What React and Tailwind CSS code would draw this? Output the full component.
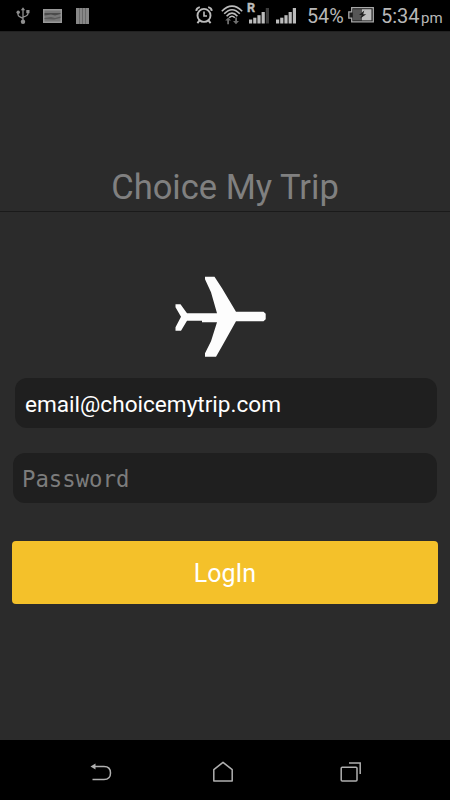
function UsbIcon() {
  return (
    <svg width="14" height="18" viewBox="0 0 14 18" fill="none" stroke="#8f8f8f" strokeWidth="1.3">
      <path d="M7 2.5V14M2 5.5V7.5Q2 9 4 9.8L7 11.3M12 4.5V6.5Q12 8.2 10 9L7 10.2" />
      <path d="M7 0.3L9.2 3.2H4.8Z" fill="#8f8f8f" stroke="none" />
      <circle cx="7" cy="14.8" r="2.2" fill="#8f8f8f" stroke="none" />
      <circle cx="2.2" cy="5.2" r="1.7" fill="#8f8f8f" stroke="none" />
      <rect x="10.3" y="3" width="3.2" height="3.2" fill="#8f8f8f" stroke="none" />
    </svg>
  );
}

function GalleryIcon() {
  return (
    <svg width="19" height="14" viewBox="0 0 19 14">
      <rect width="19" height="14" fill="#999" />
      <rect x="1.5" y="1.5" width="16" height="11" fill="#777" />
      <path d="M1.5 4H17.5V5L12 6.5L8 5.5L1.5 6.5Z" fill="#4a4a4a" />
      <path d="M1.5 9L8 8L12 9L17.5 7.5V9L11 10.5L1.5 10Z" fill="#595959" />
    </svg>
  );
}

function BarsIcon() {
  return (
    <svg width="13" height="16" viewBox="0 0 13 16">
      <rect width="13" height="16" fill="#888" />
      <path d="M3.5 0V16M6.5 0V16M9.5 0V16" stroke="#6a6a6a" strokeWidth="1" />
    </svg>
  );
}

function AlarmIcon() {
  return (
    <svg width="18" height="18" viewBox="0 0 18 18" fill="none" stroke="#bcbcbc" strokeWidth="1.9">
      <circle cx="9" cy="9.4" r="6.5" />
      <path d="M9 5.6V10H12" strokeWidth="1.6" />
      <path d="M1.2 4.8Q1.6 2 4.8 1.2M16.8 4.8Q16.4 2 13.2 1.2M4.4 14.6L2.4 17.2M13.6 14.6L15.6 17.2" />
    </svg>
  );
}

function WifiIcon() {
  return (
    <svg width="22" height="20" viewBox="0 0 22 20" fill="none" stroke="#bcbcbc" strokeWidth="1.6">
      <path d="M0.8 6.2Q11 -4 21.2 6.2M3.2 8.8Q11 0.6 18.8 8.8M5.6 11.2Q11 5 16.4 11.2M8.2 12.8Q11 9.6 13.8 12.8" />
      <path d="M7.2 12.4L10 15.6H8V19.2H6.2V15.6H4.2ZM15 19.2L18 16H16V12.6H14.2V16H12Z" fill="#6e6e6e" stroke="none" />
    </svg>
  );
}

function SignalIcon({ roaming }) {
  return (
    <svg className="overflow-visible" width="21" height="20" viewBox="0 0 21 20" fill="#bcbcbc">
      <rect x="0" y="15.5" width="3.2" height="4" />
      <rect x="4.2" y="13.7" width="3.2" height="5.8" />
      <rect x="8.4" y="11.2" width="3.2" height="8.3" />
      <rect x="12.6" y="8" width="3.2" height="11.5" />
      <rect x="16.8" y="4" width="3.2" height="15.5" fill={roaming ? "#3d3d3d" : "#bcbcbc"} />
      {roaming && (
        <text x="-2" y="8.4" fontSize="12.5" fontWeight="700" stroke="#bcbcbc" strokeWidth="0.4">R</text>
      )}
    </svg>
  );
}

function BatteryIcon() {
  return (
    <svg width="26" height="16" viewBox="0 0 26 16">
      <path d="M3.7 0.7H25.3V14.8H3.7V11.2H0.8V4.8H3.7Z" fill="#1d1d1d" stroke="#a8a8a8" strokeWidth="1.3" />
      <rect x="4.8" y="2.2" width="9.2" height="11.2" fill="#565656" />
      <rect x="14" y="2.2" width="9.5" height="11.2" fill="#bcbcbc" />
      <path d="M16.3 3.4L11 8H13.8L12.2 11.6L18.2 7.2H15.2Z" fill="#1f1f1f" />
    </svg>
  );
}

function PlaneIcon() {
  return (
    <svg width="92" height="82" viewBox="0 0.8 92 82" fill="#fdfdfd">
      <path d="M30 1.5H39.5L47 13L61 36.5H88.5L90.7 38.5V44L88.5 46H61L47 71L41 81.5H30V78L36 66L42 47H27V45.5H12L6 55.5H0.5V52L6 41.5L0.5 32V29H5.5L12 38H42L36 17L30 4Z" />
    </svg>
  );
}

function StatusBar() {
  return (
    <div className="flex h-[31px] items-center bg-black text-[#b8b8b8]">
      <div className="flex flex-1 items-center pl-4">
        <UsbIcon />
        <div className="ml-[13px]"><GalleryIcon /></div>
        <div className="ml-[14px]"><BarsIcon /></div>
      </div>
      <div className="flex items-center pr-2">
        <AlarmIcon />
        <div className="ml-[8px] -mt-[1px]"><WifiIcon /></div>
        <div className="ml-[6px] -mt-[2px]"><SignalIcon roaming /></div>
        <div className="ml-[6px] -mt-[2px]"><SignalIcon /></div>
        <span className="ml-[10px] w-[37px] pt-[3px] whitespace-nowrap text-[19.8px] leading-none">54%</span>
        <div className="ml-[4px] -mt-[1px]"><BatteryIcon /></div>
        <div className="ml-[7px] flex w-[61px] items-baseline pt-[2px] whitespace-nowrap leading-none">
          <span className="text-[20px]">5:34</span>
          <span className="ml-[1.5px] text-[15px]">pm</span>
        </div>
      </div>
    </div>
  );
}

function NavBar() {
  return (
    <div className="flex h-[60px] items-center bg-black pt-[3px] pl-[90px]">
      <svg width="22" height="18" viewBox="0 0 22 18" fill="none" stroke="#b0b0b0" strokeWidth="1.5">
        <path d="M4 3.5H14Q20.5 3.5 20.5 10Q20.5 16.5 14 16.5H2.5" />
        <path d="M0.5 3.5L5.5 0.5V6.5Z" fill="#b0b0b0" stroke="none" />
      </svg>
      <svg className="ml-[100px]" width="22" height="22" viewBox="0 0 22 22" fill="none" stroke="#b0b0b0" strokeWidth="1.5">
        <path d="M1.8 8.7L11 1.3L20.2 8.7V20H1.8Z" strokeLinejoin="round" />
      </svg>
      <svg className="ml-[105px]" width="24" height="22" viewBox="0 0 24 22" fill="none" stroke="#b0b0b0" strokeWidth="1.5">
        <rect x="2.2" y="6.2" width="15.8" height="13.8" rx="1" />
        <path d="M10 2H21.2V13" />
      </svg>
    </div>
  );
}

export default function App() {
  return (
    <div className="flex h-[800px] w-[450px] flex-col overflow-hidden bg-[#2b2b2b] font-['Roboto',sans-serif]">
      <StatusBar />

      <header className="flex h-[181px] items-end justify-center border-t border-b border-t-[#222] border-b-[#1a1a1a] pb-[4px]">
        <h1 className="text-[34.5px] leading-[40px] text-[#808080]">Choice My Trip</h1>
      </header>

      <main className="flex flex-1 flex-col pt-[64px]">
        <div className="flex h-[82px] pl-[175px]">
          <PlaneIcon />
        </div>
        <div className="mt-5 mr-[13px] ml-[15px] flex h-[50px] items-center rounded-xl bg-[#1f1f1f] pt-[3px] pl-[10px]">
          <input
            className="w-full bg-transparent text-[22.6px] text-white outline-none"
            type="text"
            defaultValue="email@choicemytrip.com"
          />
        </div>
        <div className="mt-[25px] mr-[13px] ml-[13px] flex h-[50px] items-center rounded-xl bg-[#1f1f1f] pt-[3px] pl-[9px]">
          <input
            className="w-full bg-transparent font-['DejaVu_Sans_Mono',monospace] text-[22.3px] text-white outline-none placeholder:text-[#7c7c7c]"
            type="password"
            placeholder="Password"
          />
        </div>
        <button className="mx-[12px] mt-[38px] h-[62.5px] rounded-[4px] bg-[#f4c12a] pt-[2px] text-[25px] text-white">
          LogIn
        </button>
      </main>

      <NavBar />
    </div>
  );
}
